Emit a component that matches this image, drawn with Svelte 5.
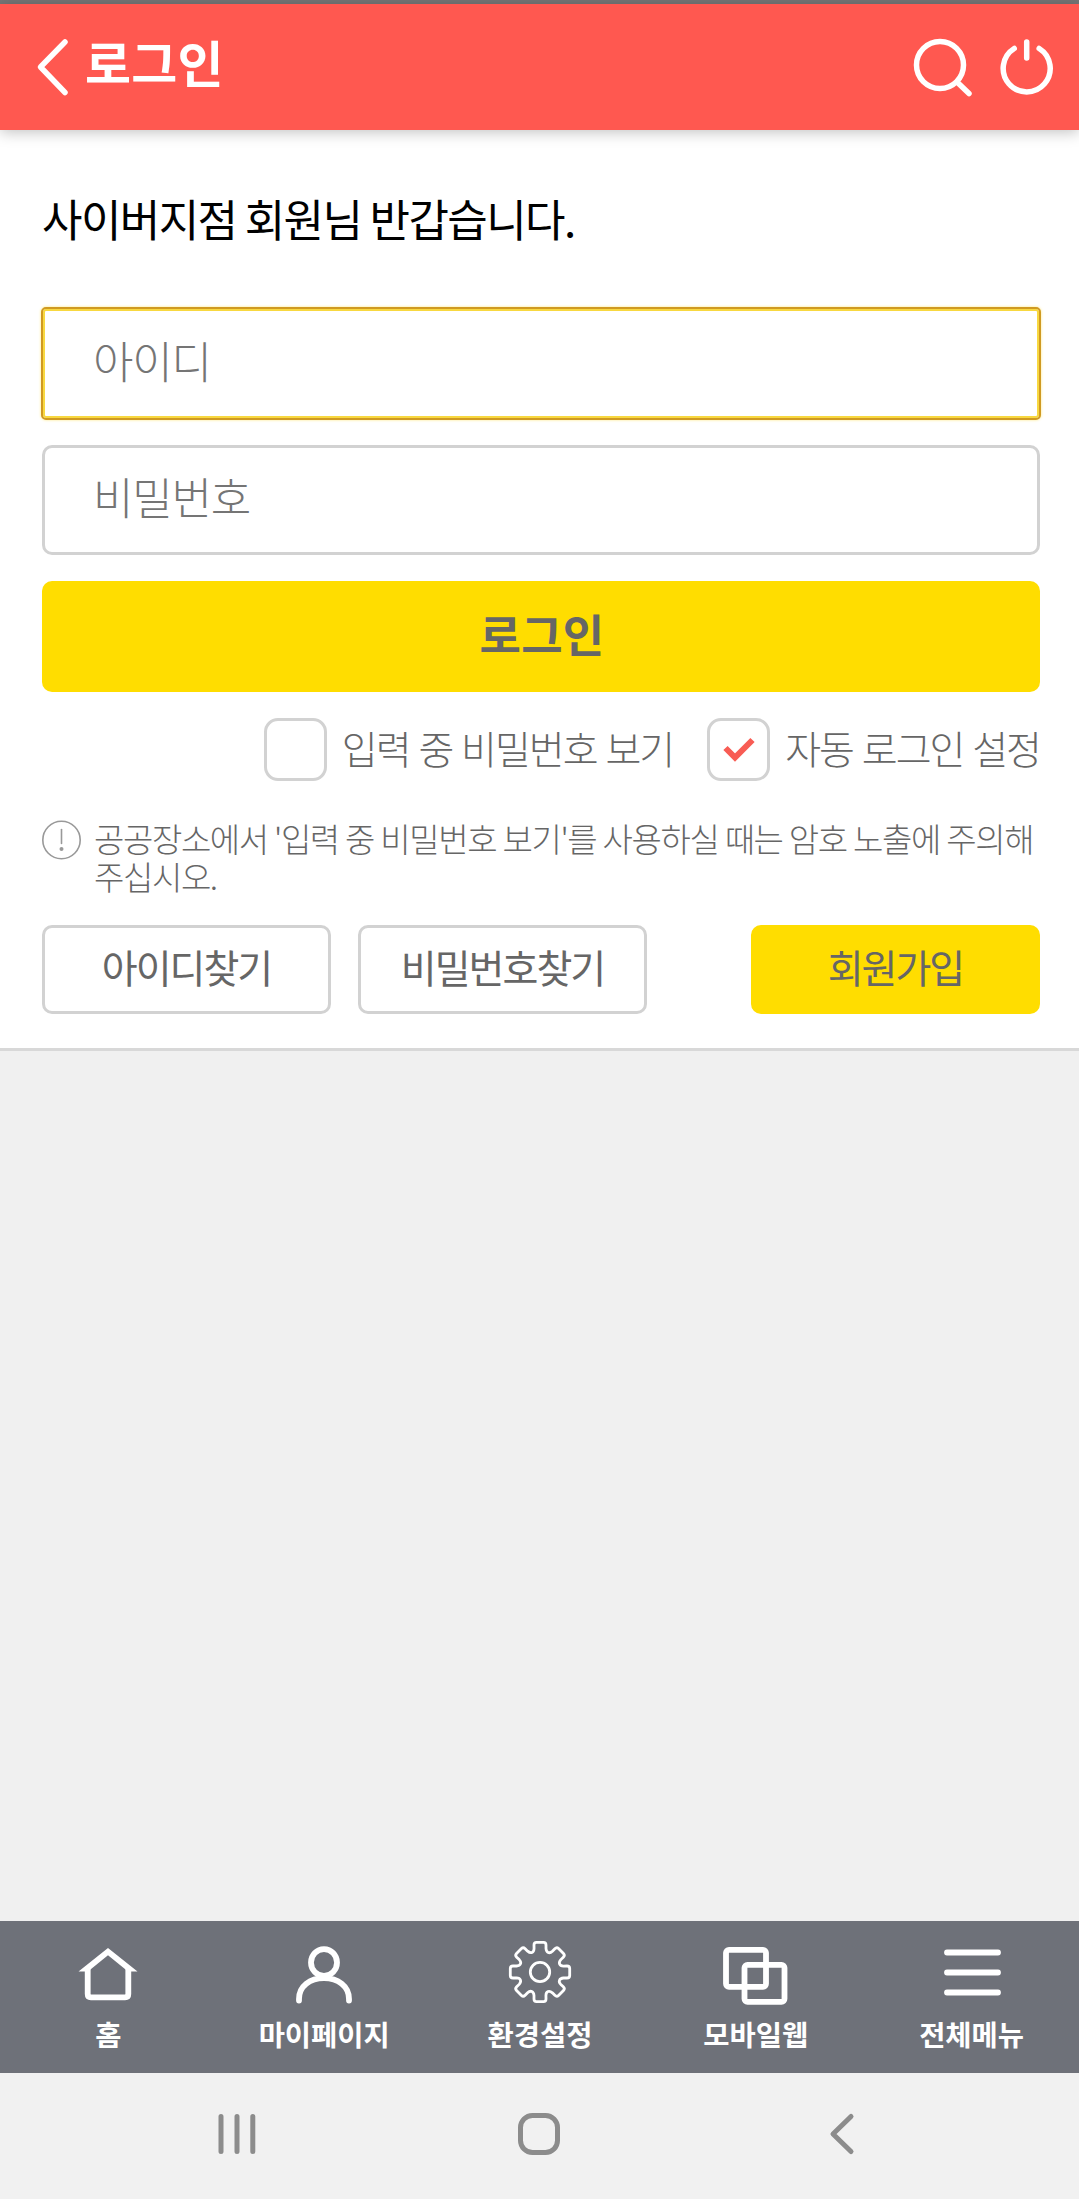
<script>
	var userId = "";
	var password = "";
	var showPassword = false;
	var autoLogin = true;

	const menus = [
		{ icon: "home", name: "홈" },
		{ icon: "user", name: "마이페이지" },
		{ icon: "gear", name: "환경설정" },
		{ icon: "web", name: "모바일웹" },
		{ icon: "menu", name: "전체메뉴" },
	];

	// one tooth and the valley after it, turned eight times around the center
	const tooth = [
		["L", [-6, -27]],
		["Q", [-6, -29.7], [-3.5, -29.7]],
		["L", [3.5, -29.7]],
		["Q", [6, -29.7], [6, -27]],
		["L", [6, -23.5]],
		["C", [6.3, -19.3], [9.4, -17.9], [12.4, -20.8]],
	];

	function turn([x, y], deg) {
		const a = (deg * Math.PI) / 180;
		const px = x * Math.cos(a) - y * Math.sin(a);
		const py = x * Math.sin(a) + y * Math.cos(a);
		return `${px.toFixed(2)} ${py.toFixed(2)}`;
	}

	const gearPath =
		[0, 45, 90, 135, 180, 225, 270, 315]
			.map((deg) => tooth.map(([cmd, ...points]) => cmd + points.map((p) => turn(p, deg)).join(" ")).join(""))
			.join("")
			.replace("L", "M") + "Z";
</script>

<div class="screen">
	<header class="header">
		<button class="icon-btn" aria-label="뒤로">
			<svg width="40" height="64" viewBox="0 0 40 64"><path d="M33 7 8.5 32 33 57.500" /></svg>
		</button>
		<h1>로그인</h1>
		<button class="icon-btn" aria-label="검색">
			<svg width="62" height="62" viewBox="0 0 62 62"><circle cx="29" cy="29" r="23.500" /><path d="M46 46 58 57.500" /></svg>
		</button>
		<button class="icon-btn power" aria-label="종료">
			<svg width="60" height="62" viewBox="0 0 60 62"><path d="M17.200 12.500A23.500 23.500 0 1 0 42.200 12.500M29.700 6V22" /></svg>
		</button>
	</header>

	<form class="login" on:submit|preventDefault>
		<p class="welcome">사이버지점 회원님 반갑습니다.</p>
		<input class="field focused" type="text" placeholder="아이디" bind:value={userId} />
		{#if showPassword}
			<input class="field" type="text" placeholder="비밀번호" bind:value={password} />
		{:else}
			<input class="field" type="password" placeholder="비밀번호" bind:value={password} />
		{/if}
		<button class="submit">로그인</button>

		<div class="options">
			<label>
				<input type="checkbox" bind:checked={showPassword} />
				<span class="box">
					{#if showPassword}<svg width="34" height="30" viewBox="0 0 34 30"><path d="M3.500 13 13 22.500 30.500 5" /></svg>{/if}
				</span>
				<span class="option-name">입력 중 비밀번호 보기</span>
			</label>
			<label>
				<input type="checkbox" bind:checked={autoLogin} />
				<span class="box">
					{#if autoLogin}<svg width="34" height="30" viewBox="0 0 34 30"><path d="M3.500 13 13 22.500 30.500 5" /></svg>{/if}
				</span>
				<span class="option-name">자동 로그인 설정</span>
			</label>
		</div>

		<div class="notice">
			<svg width="40" height="40" viewBox="0 0 40 40">
				<circle cx="19.500" cy="20" r="18.700" />
				<path d="M19.500 9.500V23.500" />
				<circle class="dot" cx="19.500" cy="29" r="2" />
			</svg>
			<p>공공장소에서 '입력 중 비밀번호 보기'를 사용하실 때는 암호 노출에 주의해<br />주십시오.</p>
		</div>

		<div class="links">
			<button type="button">아이디찾기</button>
			<button type="button">비밀번호찾기</button>
			<button type="button" class="join">회원가입</button>
		</div>
	</form>

	<nav class="menus">
		{#each menus as menu}
			<button class="menu">
				<svg width="72" height="72" viewBox="-36 -36 72 72">
					{#if menu.icon == "home"}
						<path d="M-20.300 -3V22Q-20.300 25.300 -17 25.300H17Q20.300 25.300 20.300 22V-3" />
						<path class="solid" d="M0 -24 29.500 -.5H20L0 -16.800 -20 -.5H-29.500Z" />
					{:else if menu.icon == "user"}
						<ellipse cx="0" cy="-9.500" rx="13" ry="13.300" />
						<path d="M-25 28.500V27C-25 14-14 6.200 0 6.200S25 14 25 27V28.500" />
					{:else if menu.icon == "gear"}
						<g class="thin" transform="translate(1 0)"><path d={gearPath} /><circle cx="0" cy="0" r="9.700" /></g>
					{:else if menu.icon == "web"}
						<rect x="-29" y="-22.200" width="40" height="37" rx="3" />
						<rect x="-10.500" y="-7.200" width="40" height="37" rx="3" />
					{:else}
						<path d="M-24 -19.500H27M-24 .5H27M-24 20.500H27" />
					{/if}
				</svg>
				<span>{menu.name}</span>
			</button>
		{/each}
	</nav>

	<div class="system">
		<svg width="42" height="50" viewBox="0 0 42 50"><path d="M5 7.500V42.500M21 7.500V42.500M36.800 7.500V42.500" /></svg>
		<svg width="50" height="50" viewBox="0 0 50 50"><rect x="5.500" y="6.500" width="37" height="37" rx="12" /></svg>
		<svg width="40" height="50" viewBox="0 0 40 50"><path d="M29 7.500 11 25 29 42.500" /></svg>
	</div>
</div>

<style>
	:global(body) {
		margin: 0;
		background: #f0f0f0;
	}
	.screen {
		box-sizing: border-box;
		height: 2199px;
		display: flex;
		flex-direction: column;
		border-top: 4px solid #777;
		font-family: "Noto Sans CJK KR", sans-serif;
		color: #666;
	}
	button {
		padding: 0;
		border: 0;
		background: none;
		font-family: inherit;
		color: inherit;
		white-space: nowrap;
	}
	h1,
	p {
		margin: 0;
	}
	svg {
		display: block;
		flex: none;
		fill: none;
		stroke-linecap: round;
		stroke-linejoin: round;
	}

	.header {
		position: relative;
		box-sizing: border-box;
		height: 126px;
		flex: none;
		display: flex;
		align-items: center;
		padding: 0 22px 0 32px;
		background: #ff5850;
		box-shadow: 0 2px 14px rgba(0, 0, 0, 0.25);
	}
	.header svg {
		stroke: #fff;
		stroke-width: 5.5;
	}
	.header h1 {
		flex: 1;
		margin: -12px 0 0 13px;
		font-size: 50px;
		line-height: 60px;
		letter-spacing: 0.3px;
		font-weight: 700;
		color: #fff;
	}
	.power {
		margin-left: 24px;
	}

	.login {
		box-sizing: border-box;
		height: 921px;
		flex: none;
		padding: 58px 39px 0 42px;
		background: #fff;
		border-bottom: 3px solid #d8d8d8;
	}
	.welcome {
		height: 60px;
		margin-bottom: 60px;
		font-size: 44px;
		line-height: 60px;
		letter-spacing: -1.6px;
		color: #000;
	}
	.field {
		display: block;
		box-sizing: border-box;
		width: 100%;
		height: 110px;
		margin: 0 0 26px;
		padding: 0 50px 8px 48px;
		border: 3px solid #d2d2d2;
		border-radius: 10px;
		outline: none;
		background: #fff;
		font-family: inherit;
		font-size: 44px;
		letter-spacing: -1.2px;
		font-weight: 300;
		color: #000;
	}
	.field::placeholder {
		color: #757575;
		opacity: 1;
	}
	.field.focused {
		width: calc(100% + 2px);
		height: 113px;
		margin: -1px -1px 25px;
		padding-left: 50px;
		border: 2px solid #d09a22;
		border-radius: 5px;
		box-shadow:
			inset 0 0 0 2px #f8d840,
			0 0 3px #ffe980;
	}
	.submit {
		display: block;
		width: 100%;
		height: 111px;
		padding: 0 0 6px 2px;
		border-radius: 10px;
		background: #ffdd00;
		font-size: 45px;
		letter-spacing: 0.3px;
		font-weight: 700;
	}

	.options {
		display: flex;
		justify-content: flex-end;
		gap: 34px;
		margin-top: 26px;
	}
	.options label {
		display: flex;
		align-items: center;
	}
	.options input {
		display: none;
	}
	.box {
		box-sizing: border-box;
		width: 63px;
		height: 63px;
		display: flex;
		align-items: center;
		justify-content: center;
		border: 3px solid #d2d2d2;
		border-radius: 14px;
		background: #fff;
	}
	.box svg {
		stroke: #f85c54;
		stroke-width: 6;
		stroke-linecap: butt;
		stroke-linejoin: miter;
	}
	.option-name {
		margin: -6px 0 0 15px;
		font-size: 39px;
		line-height: 60px;
		letter-spacing: -2px;
		word-spacing: 2.2px;
		font-weight: 300;
	}

	.notice {
		display: flex;
		gap: 12px;
		height: 76px;
		margin-top: 39px;
		font-size: 33px;
		line-height: 38px;
		letter-spacing: -1.4px;
		word-spacing: 0.4px;
		font-weight: 300;
		white-space: nowrap;
	}
	.notice p {
		margin-top: -1px;
	}
	.notice svg {
		stroke: #999;
		stroke-width: 1.6;
	}
	.notice .dot {
		fill: #999;
		stroke: none;
	}

	.links {
		display: flex;
		gap: 27px;
		margin-top: 29px;
	}
	.links button {
		box-sizing: border-box;
		width: 289px;
		height: 89px;
		padding-bottom: 7px;
		border: 3px solid #d2d2d2;
		border-radius: 10px;
		font-size: 39px;
		letter-spacing: -2px;
		font-weight: 400;
	}
	.links .join {
		margin-left: auto;
		border-color: #ffdd00;
		background: #ffdd00;
	}

	.menus {
		height: 152px;
		flex: none;
		display: flex;
		margin-top: auto;
		background: #6e7179;
		color: #fff;
	}
	.menu {
		flex: 1;
		display: flex;
		flex-direction: column;
		align-items: center;
		padding-top: 15px;
		font-size: 28.5px;
		line-height: 40px;
		font-weight: 700;
	}
	.menu span {
		margin: 6px 0 0 1px;
	}
	.menu svg {
		stroke: #fff;
		stroke-width: 5.8;
	}
	.menu .solid {
		fill: #fff;
		stroke: none;
	}
	.menu .thin {
		stroke-width: 2.8;
	}

	.system {
		box-sizing: border-box;
		height: 126px;
		flex: none;
		display: flex;
		justify-content: space-between;
		align-items: center;
		padding: 0 217px 4px 216px;
		background: #f1f1f1;
	}
	.system svg {
		stroke: #8c8c8c;
		stroke-width: 5;
	}
</style>
